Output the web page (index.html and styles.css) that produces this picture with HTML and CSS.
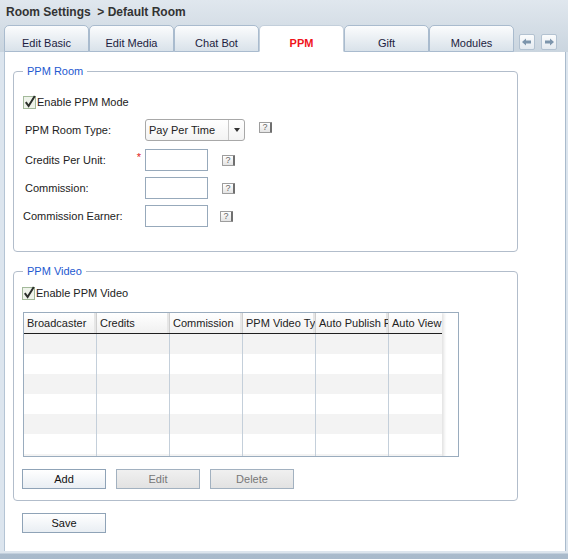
FILE: index.html
```html
<!DOCTYPE html>
<html>
<head>
<meta charset="utf-8">
<title>Room Settings</title>
<link rel="stylesheet" href="styles.css">
</head>
<body>
<div class="app">
  <div class="top">
    <div class="titlebar">Room Settings&nbsp; &gt; Default Room</div>
    <div class="tabbar">
      <div class="tab">Edit Basic</div>
      <div class="tab">Edit Media</div>
      <div class="tab">Chat Bot</div>
      <div class="tab active">PPM</div>
      <div class="tab">Gift</div>
      <div class="tab">Modules</div>
      <div class="navs">
        <span class="nav"><svg width="10" height="8" viewBox="0 0 10 8"><path d="M0 4 L4 0.5 L4 2.5 L9 2.5 L9 5.5 L4 5.5 L4 7.5 Z" fill="#7d95ac"/></svg></span>
        <span class="nav"><svg width="10" height="8" viewBox="0 0 10 8"><path d="M10 4 L6 0.5 L6 2.5 L1 2.5 L1 5.5 L6 5.5 L6 7.5 Z" fill="#7d95ac"/></svg></span>
      </div>
    </div>
  </div>
  <div class="panel">
    <fieldset class="fs fs-room">
      <legend>PPM Room</legend>
      <label class="check first-check">
        <svg class="cb" width="14" height="14" viewBox="0 0 14 14"><rect x="0.5" y="1.5" width="12" height="12" fill="#eef3ea" stroke="#a3b99a"/><path d="M2.8 7.2 L5.6 11 L11.8 1" fill="none" stroke="#2b2f2b" stroke-width="2"/></svg>Enable PPM Mode
      </label>
      <div class="rows">
        <div class="row row-select">
          <span class="lbl lbl-pad">PPM Room Type:</span>
          <div class="select"><span class="sel-text">Pay Per Time</span><span class="sel-btn"><svg width="6" height="4" viewBox="0 0 6 4"><path d="M0 0 L6 0 L3 4 Z" fill="#333"/></svg></span></div>
          <span class="help help-up">?</span>
        </div>
        <div class="row">
          <span class="lbl lbl-pad">Credits Per Unit:<span class="req">*</span></span>
          <input class="txt" type="text">
          <span class="help">?</span>
        </div>
        <div class="row">
          <span class="lbl lbl-pad">Commission:</span>
          <input class="txt" type="text">
          <span class="help">?</span>
        </div>
        <div class="row">
          <span class="lbl">Commission Earner:</span>
          <input class="txt" type="text">
          <span class="help help-left">?</span>
        </div>
      </div>
    </fieldset>

    <fieldset class="fs fs-video">
      <legend>PPM Video</legend>
      <label class="check video-check">
        <svg class="cb" width="14" height="14" viewBox="0 0 14 14"><rect x="0.5" y="1.5" width="12" height="12" fill="#eef3ea" stroke="#a3b99a"/><path d="M2.8 7.2 L5.6 11 L11.8 1" fill="none" stroke="#2b2f2b" stroke-width="2"/></svg>Enable PPM Video
      </label>
      <div class="grid">
        <div class="cols">
          <div class="ghead">
            <div class="hc">Broadcaster</div>
            <div class="hc">Credits</div>
            <div class="hc">Commission</div>
            <div class="hc">PPM Video Type</div>
            <div class="hc">Auto Publish PPM</div>
            <div class="hc last">Auto View</div>
          </div>
          <div class="grow odd"><div></div><div></div><div></div><div></div><div></div><div class="last"></div></div>
          <div class="grow"><div></div><div></div><div></div><div></div><div></div><div class="last"></div></div>
          <div class="grow odd"><div></div><div></div><div></div><div></div><div></div><div class="last"></div></div>
          <div class="grow"><div></div><div></div><div></div><div></div><div></div><div class="last"></div></div>
          <div class="grow odd"><div></div><div></div><div></div><div></div><div></div><div class="last"></div></div>
          <div class="grow"><div></div><div></div><div></div><div></div><div></div><div class="last"></div></div>
          <div class="grow odd"><div></div><div></div><div></div><div></div><div></div><div class="last"></div></div>
        </div>
      </div>
      <div class="btns">
        <button class="btn">Add</button>
        <button class="btn disabled">Edit</button>
        <button class="btn disabled">Delete</button>
      </div>
    </fieldset>

    <button class="btn save">Save</button>
  </div>
  <div class="footer"></div>
</div>
</body>
</html>
```

FILE: styles.css
```css
* { box-sizing: border-box; }
html, body { margin: 0; padding: 0; }
body {
  width: 568px;
  height: 559px;
  overflow: hidden;
  background: #dce5ee;
  font-family: "Liberation Sans", Arial, sans-serif;
  font-size: 11px;
  color: #222;
}
.app {
  width: 568px;
  height: 559px;
  display: flex;
  flex-direction: column;
}
.top {
  background: linear-gradient(#e0e7ee, #cad5df);
}
.titlebar {
  height: 25px;
  line-height: 24px;
  padding-left: 6px;
  font-weight: bold;
  font-size: 12px;
  color: #333;
}
.tabbar {
  height: 27px;
  display: flex;
  align-items: flex-end;
  padding-left: 4px;
}
.tab {
  width: 85px;
  height: 27px;
  border: 1px solid #a9bbce;
  border-radius: 5px 5px 0 0;
  background: linear-gradient(#fbfcfd, #d9e2ea);
  text-align: center;
  padding-top: 10px;
  line-height: 14px;
  color: #1c1c40;
}
.tab.active {
  background: #fff;
  border-color: #c3cfdb;
  border-bottom-color: #fff;
  color: #f0141c;
  font-weight: bold;
}
.navs {
  align-self: flex-start;
  margin-top: 9px;
  margin-left: 5px;
  display: flex;
  gap: 6px;
}
.nav {
  width: 16px;
  height: 16px;
  border: 1px solid #b3c2d1;
  border-radius: 2px;
  background: linear-gradient(#fbfcfd, #e4eaf0);
  display: flex;
  align-items: center;
  justify-content: center;
}
.panel {
  height: 499px;
  margin: 0 2px 0 4px;
  border-left: 1px solid #b4c4d4;
  border-right: 1px solid #aabbcc;
  background: #fff;
  padding: 12px 0 0 8px;
}
.fs {
  margin: 0;
  width: 505px;
  border: 1px solid #b2bdcb;
  border-radius: 4px;
  padding: 0 0 0 9px;
}
.fs legend {
  padding: 0 4px;
  color: #2459d0;
  font-size: 11px;
  line-height: 14px;
}
.fs-room { padding-bottom: 24px; }
.fs-video { margin-top: 12px; padding-bottom: 11px; }
.check {
  display: flex;
  align-items: center;
  height: 14px;
  gap: 0;
}
.cb { display: block; margin-right: 0; }
.first-check { margin-top: 17px; }
.video-check { margin-top: 8px; margin-left: -1px; }
.rows {
  margin-top: 10px;
  display: flex;
  flex-direction: column;
  gap: 6px;
}
.row {
  display: flex;
  align-items: center;
  height: 22px;
}
.row-select { margin-bottom: 2px; }
.lbl {
  width: 122px;
  display: flex;
  justify-content: space-between;
  padding-right: 4px;
}
.lbl-pad { padding-left: 2px; }
.req {
  color: #e02020;
  font-size: 11px;
  position: relative;
  top: -3px;
}
.select {
  width: 100px;
  height: 22px;
  border: 1px solid #a8a8a8;
  border-radius: 3px;
  background: linear-gradient(#fff, #f3f3f3);
  display: flex;
  align-items: center;
}
.sel-text {
  flex: 1;
  padding-left: 3px;
  font-size: 11px;
  color: #222;
}
.sel-btn {
  width: 16px;
  height: 20px;
  border-left: 1px solid #c8c8c8;
  display: flex;
  align-items: center;
  justify-content: center;
}
.txt {
  width: 63px;
  height: 22px;
  border: 1px solid #97a9bb;
  margin: 0;
  padding: 0 2px;
  font: inherit;
  background: #fff;
}
.help {
  margin-left: 14px;
  width: 13px;
  height: 11px;
  border: 1px solid #9d9d9d;
  border-right: 2px solid #6f6f6f;
  border-radius: 1px;
  background: linear-gradient(#fff, #e4e4e4);
  font-size: 9px;
  line-height: 9px;
  text-align: center;
  color: #666;
}
.help-up { margin-top: -5px; }
.help-left { margin-left: 12px; }
.grid {
  margin-top: 12px;
  width: 436px;
  height: 145px;
  border: 1px solid #9aacbe;
  overflow: hidden;
  background: #fff;
}
.cols {
  width: 418px;
  box-shadow: 2px 0 3px rgba(0,0,0,0.12);
}
.ghead, .grow {
  display: grid;
  grid-template-columns: 73px 73px 73px 73px 73px 53px;
}
.ghead {
  height: 21px;
  border-bottom: 1px solid #1e1e1e;
  background: linear-gradient(#fff, #f0f0f0);
}
.hc {
  padding-left: 3px;
  line-height: 20px;
  white-space: nowrap;
  overflow: hidden;
  color: #222;
  border-right: 1px solid #cfcfcf;
  box-shadow: inset -2px 0 0 #e6e6e6;
}
.hc.last { border-right: none; box-shadow: none; }
.grow { height: 20px; }
.grow.odd { background: #f3f3f3; }
.grow div { border-right: 1px solid #c4cfda; }
.grow div.last { border-right: none; }
.btns {
  margin-top: 12px;
  margin-left: -1px;
  display: flex;
  gap: 10px;
}
.btn {
  width: 84px;
  height: 20px;
  margin: 0;
  padding: 0;
  border: 1px solid #8fa3b7;
  background: linear-gradient(#fff, #e9eef3);
  font-family: "Liberation Sans", Arial, sans-serif;
  font-size: 11px;
  color: #111;
  display: block;
}
.btn.disabled {
  background: linear-gradient(#f0f0f0, #e2e2e2);
  border-color: #a2b1c0;
  color: #777;
}
.save {
  margin-top: 12px;
  margin-left: 9px;
}
.footer {
  height: 8px;
  background: linear-gradient(#dde5ed 0, #dde5ed 2px, #aabbcc 3px, #a8b9ca 100%);
}
```
